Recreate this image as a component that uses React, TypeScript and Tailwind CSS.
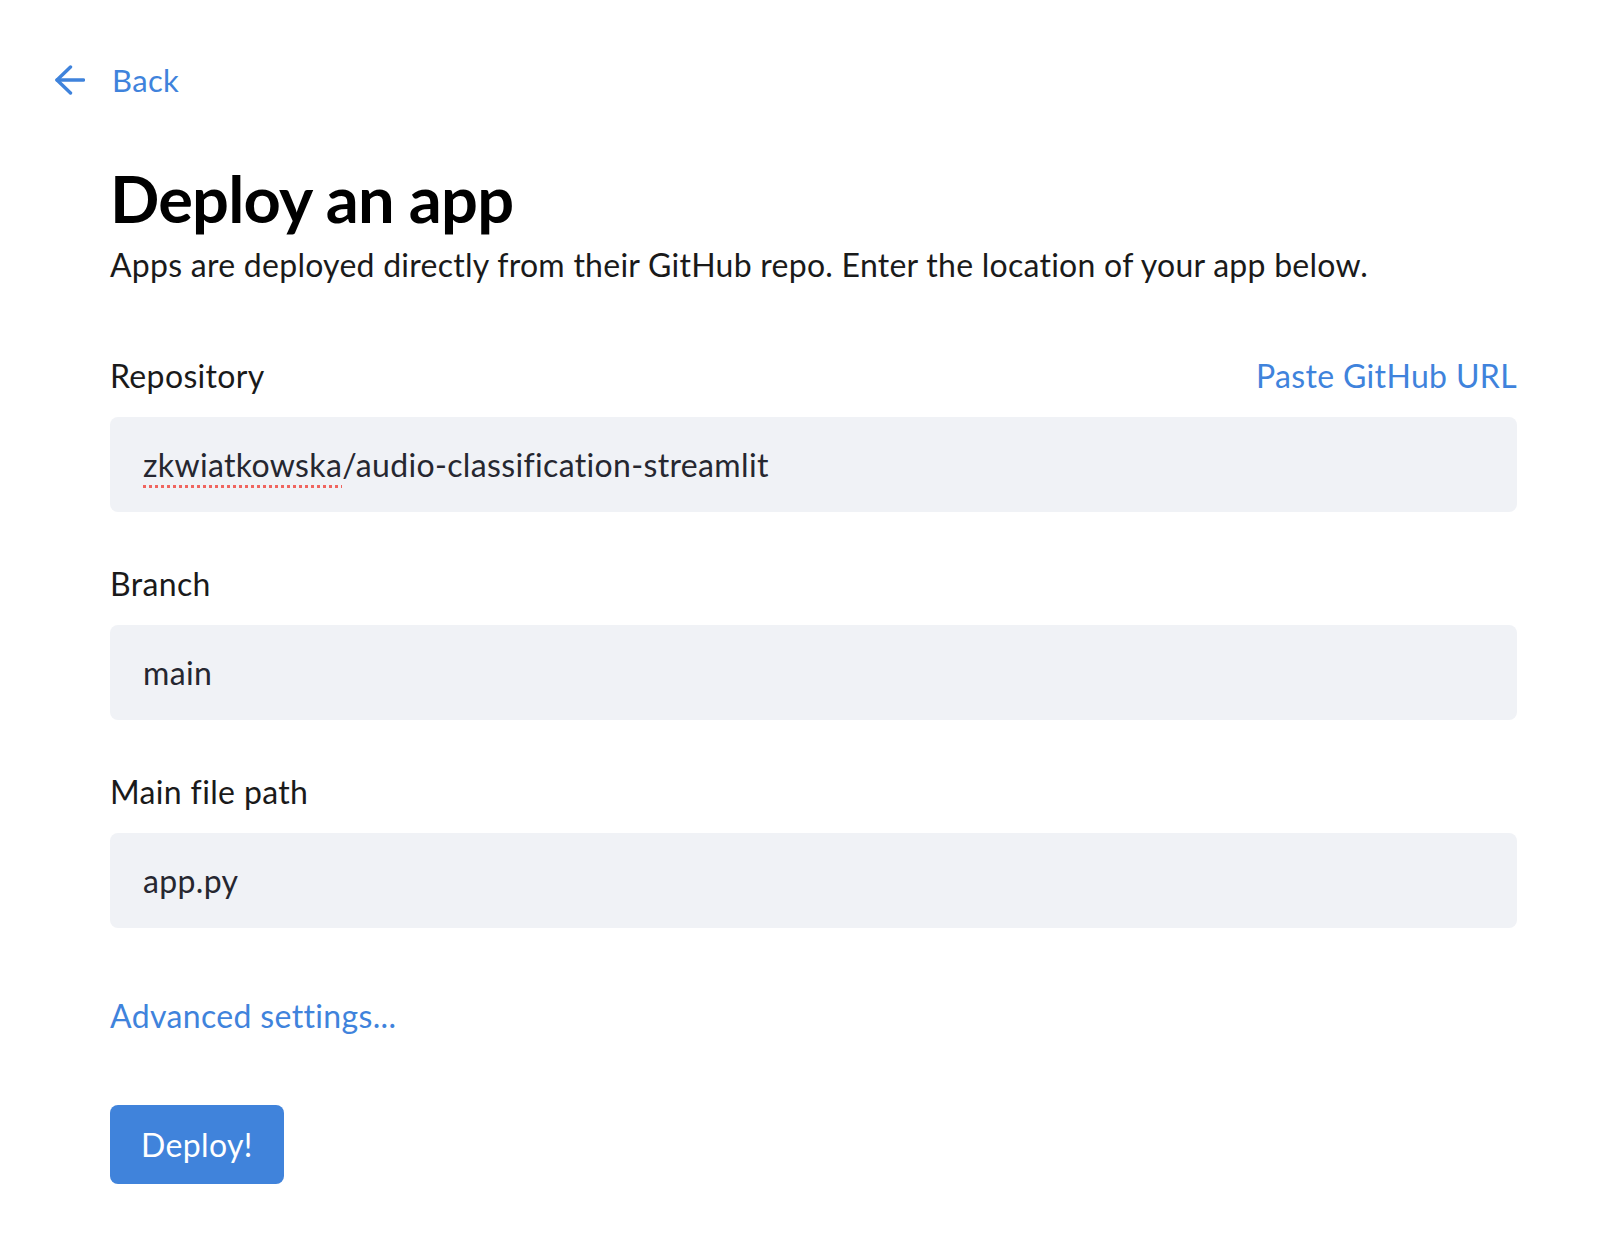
import { useState } from "react";

const font = { fontFamily: "Lato, 'Noto Sans', sans-serif" };

function ArrowBack() {
  return (
    <svg width="30" height="30" viewBox="0 0 30 30" fill="none" stroke="currentColor" strokeWidth="3.4" strokeLinecap="round" strokeLinejoin="round">
      <path d="M28.5 15H2" />
      <path d="M15.5 2 2 15l13.5 13" />
    </svg>
  );
}

function Field({ label, value, extra, spell }: { label: string; value: string; extra?: string; spell?: string }) {
  return (
    <div className="flex flex-col">
      <div className="flex h-[36px] items-center justify-between text-[32px] leading-[36px] tracking-[0.35px] text-[#1a1a1a]">
        <span>{label}</span>
        {extra && <a className="cursor-pointer text-[#3f83dc]">{extra}</a>}
      </div>
      <div className="mt-[23px] flex h-[95px] items-center rounded-lg bg-[#f0f2f6] px-[33px] text-[32px] tracking-[0.35px] text-[#262730]">
        {spell && (
          <span className="underline decoration-[#f0655f] decoration-dotted decoration-[3px] underline-offset-[8px]">{spell}</span>
        )}
        <span>{value}</span>
      </div>
    </div>
  );
}

export default function App() {
  const [showAdvanced, setShowAdvanced] = useState(false);

  return (
    <div className="min-h-screen bg-white pl-[55px] pt-[60px]" style={font}>
      {/* Back link */}
      <div className="flex h-[40px] items-center gap-[27px] text-[31px] tracking-[0.35px] text-[#3f83dc]">
        <ArrowBack />
        <span>Back</span>
      </div>

      <div className="ml-[55px] w-[1407px]">
        <h1 className="mt-[58px] text-[65px] font-bold leading-[80px] tracking-[-0.8px] text-black">Deploy an app</h1>
        <p className="mt-[7px] text-[32px] leading-[40px] tracking-[0.26px] text-[#1a1a1a]">
          Apps are deployed directly from their GitHub repo. Enter the location of your app below.
        </p>

        <div className="mt-[73px] flex flex-col gap-[54px]">
          <Field label="Repository" extra="Paste GitHub URL" spell="zkwiatkowska" value="/audio-classification-streamlit" />
          <Field label="Branch" value="main" />
          <Field label="Main file path" value="app.py" />
        </div>

        <button
          onClick={() => setShowAdvanced(!showAdvanced)}
          className="mt-[70px] block h-[36px] text-[32px] leading-[36px] tracking-[0.35px] text-[#3f83dc]"
        >
          Advanced settings...
        </button>

        <button className="mt-[71px] block h-[79px] rounded-lg bg-[#4083db] px-[31px] text-[32px] tracking-[0.35px] text-white">
          Deploy!
        </button>
      </div>
    </div>
  );
}
